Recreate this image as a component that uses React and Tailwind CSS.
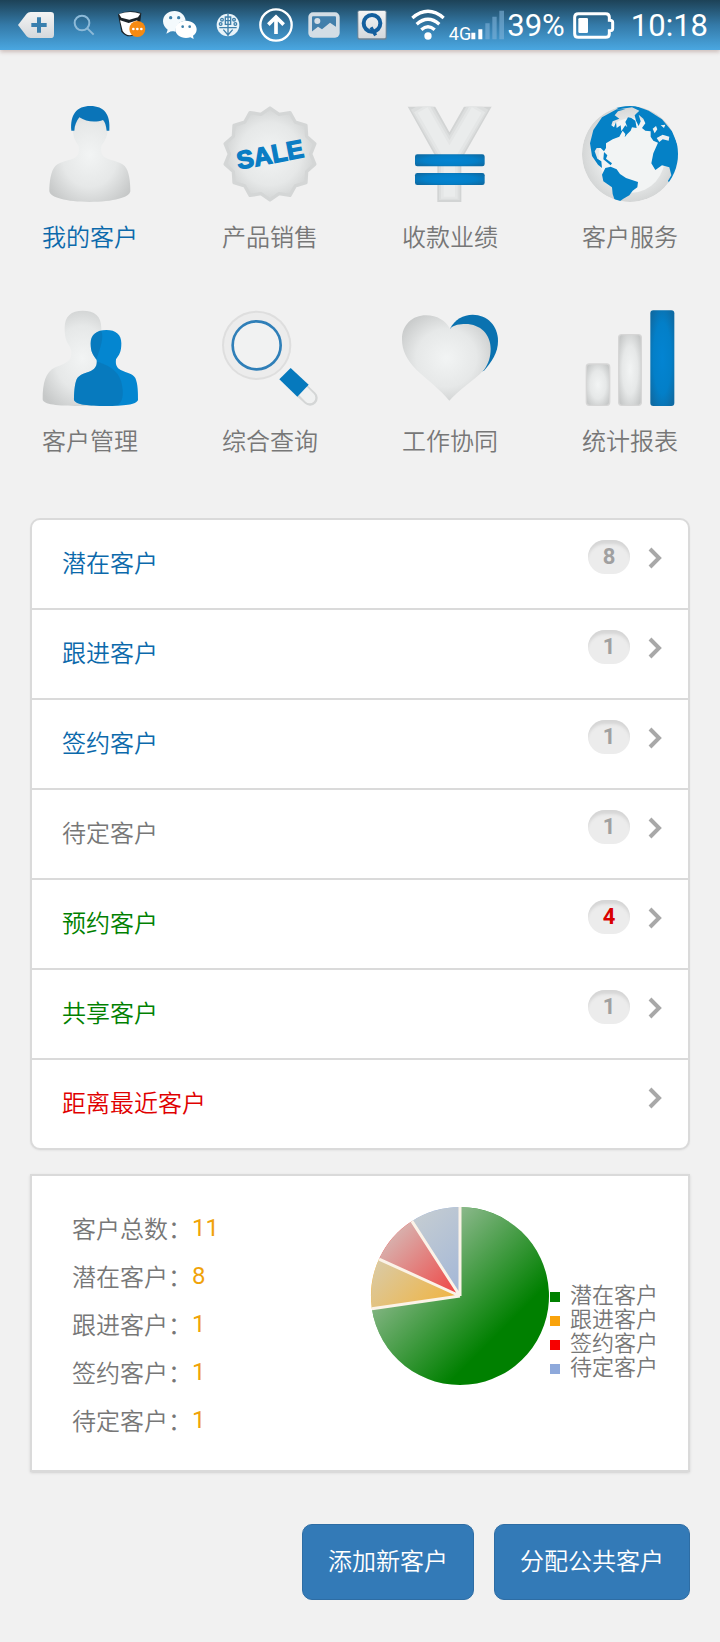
import React from "react";

function IconDefs() {
  return (
    <svg className="absolute h-0 w-0" aria-hidden="true">
      <defs>
        <radialGradient id="silver" cx="50%" cy="50%" r="62%">
          <stop offset="0" stopColor="#f2f4f4" />
          <stop offset="0.55" stopColor="#e6e8e8" />
          <stop offset="1" stopColor="#c6c8c8" />
        </radialGradient>
        <radialGradient id="ocean" cx="50%" cy="50%" r="62%">
          <stop offset="0" stopColor="#0384d2" />
          <stop offset="0.6" stopColor="#037fc8" />
          <stop offset="1" stopColor="#0e6ba4" />
        </radialGradient>
        <linearGradient id="plate" x1="0" y1="0" x2="0" y2="1">
          <stop offset="0" stopColor="#f4f4f4" />
          <stop offset="1" stopColor="#d4d8dc" />
        </linearGradient>
      </defs>
    </svg>
  );
}

function Glyph({ children }) {
  return (
    <svg viewBox="0 0 288 288" className="size-24" aria-hidden="true">
      {children}
    </svg>
  );
}

const PersonIcon = () => (
  <Glyph>
    <path
      d="M94 60C94 25 112 4 145 4C178 4 197 25 197 60C199 90 188 105 178 120C176 135 178 146 188 154C205 166 232 164 248 180C262 195 265 230 265 256C263 274 215 288 143 288C72 288 24 274 22 256C22 230 26 195 40 180C56 164 84 166 101 154C111 146 112 135 110 120C100 105 90 90 94 60Z"
      fill="url(#silver)"
    />
    <path
      d="M88 74C84 26 104 0 145 0C187 0 206 26 202 74H194C192 58 189 48 183 42C162 50 132 48 112 34C103 46 98 58 97 74Z"
      fill="#0a74b8"
    />
  </Glyph>
);

const SEAL_POINTS = Array.from({ length: 28 }, (_, i) => {
  const r = i % 2 ? 122 : 138;
  const a = (i * Math.PI) / 14 - Math.PI / 2;
  return `${(144 + r * Math.cos(a)).toFixed(1)},${(144 + r * Math.sin(a)).toFixed(1)}`;
}).join(" ");

const SaleIcon = () => (
  <Glyph>
    <polygon points={SEAL_POINTS} fill="url(#silver)" stroke="#d4d6d6" strokeWidth="10" strokeLinejoin="round" />
    <text
      x="144"
      y="172"
      textAnchor="middle"
      transform="rotate(-11 144 144)"
      fontSize="76"
      fill="#0a7dc4"
      stroke="#0a7dc4"
      strokeWidth="4"
      className="font-['Liberation_Sans',sans-serif] font-bold"
    >
      SALE
    </text>
  </Glyph>
);

const YenIcon = () => (
  <Glyph>
    <clipPath id="yen-clip">
      <rect x="0" y="2" width="288" height="286" rx="2" />
    </clipPath>
    <g fill="none" strokeLinejoin="round" clipPath="url(#yen-clip)">
      <path d="M46 -20L142 152L240 -20M142 152V288" stroke="#d2d4d4" strokeWidth="72" />
      <path d="M54 -4L142 152L232 -4M142 152V282" stroke="#dcdede" strokeWidth="62" />
      <path d="M58 6L142 152L228 6M142 152V278" stroke="#e4e6e6" strokeWidth="50" />
      <path d="M62 12L142 152L224 12M142 152V272" stroke="#eaecec" strokeWidth="34" />
    </g>
    <rect x="39" y="145" width="209" height="36" rx="7" fill="url(#ocean)" />
    <rect x="39" y="201" width="209" height="36" rx="7" fill="url(#ocean)" />
  </Glyph>
);

const GlobeIcon = () => (
  <Glyph>
    <clipPath id="globe-clip">
      <circle cx="144" cy="144" r="144" />
    </clipPath>
    <g clipPath="url(#globe-clip)">
      <circle cx="144" cy="144" r="144" fill="url(#silver)" />
      <ellipse cx="150" cy="148" rx="100" ry="112" fill="#f2f4f4" />
      <path
        d="M104 10L60 34L34 72L24 112L30 150L48 176L60 186L58 166L46 158L38 136L44 126L56 126L66 136L72 126L72 112L92 100L112 92L122 74L130 84L128 94L136 84L146 74L150 64L164 66L160 44L148 36L138 34L130 48L136 64L130 58L118 76L116 58L104 66L102 48L96 64L88 58L92 46L112 38L98 28L108 16L130 10Z"
        fill="#0581c6"
      />
      <path
        d="M98 2L150 -4L200 14L240 40L270 76L290 124L290 180L264 236L258 224L268 208L262 184L240 178L220 192L208 172L214 142L228 110L214 104L206 92L206 76L190 74L180 66L190 52L184 38L170 26L176 46L170 60L162 44L158 28L172 14L150 4L110 10Z"
        fill="#0581c6"
      />
      <path d="M224 96L242 86L262 92L260 104L242 100L232 108ZM236 58L250 56L246 66ZM212 68L222 60L226 70L218 82Z" fill="#eef0f0" />
      <path
        d="M66 138L76 148L72 158L90 172L86 178L64 160Z M70 186L86 182L104 190L114 204L132 216L168 228L166 244L152 254L142 268L124 278L110 288L98 282L92 264L90 244L64 226L60 206Z"
        fill="#0581c6"
      />
    </g>
  </Glyph>
);

const PeopleIcon = () => (
  <Glyph>
    <path
      d="M68 54C68 18 88 2 122 2C158 2 178 18 178 54C178 84 168 102 158 118C156 138 162 150 178 160C210 172 240 180 240 256C240 280 190 288 110 288C50 288 2 284 2 268C2 220 10 186 40 172C60 164 78 158 86 144C90 126 88 116 80 104C70 90 68 74 68 54Z"
      fill="url(#silver)"
    />
    <path
      d="M146 100C146 74 164 60 193 60C222 60 238 74 238 100C238 126 232 134 222 148C220 164 224 174 236 180C256 190 272 190 280 204C288 222 288 250 288 270C284 284 244 288 192 288C140 288 100 284 96 270C96 250 98 222 104 208C112 192 130 190 148 182C160 176 166 166 164 150C152 134 146 126 146 100Z"
      fill="#0486d0"
    />
    <path
      d="M178 62C192 96 150 160 168 156C208 168 240 190 242 240C244 268 236 284 220 287C150 290 100 284 96 270C96 250 98 222 104 208C112 192 130 190 148 182C160 176 166 166 164 150C152 134 146 126 146 100C146 78 158 66 178 62Z"
      fill="#0b6da8"
      opacity="0.45"
    />
  </Glyph>
);

const SearchIcon = () => (
  <Glyph>
    <circle cx="104" cy="106" r="104" fill="#dedede" />
    <circle cx="104" cy="106" r="98" fill="#ececec" />
    <circle cx="104" cy="106" r="72" fill="#f1f2f2" stroke="#2f7fb8" strokeWidth="8" />
    <path d="M236 238L264 264" stroke="#d4d6d6" strokeWidth="46" strokeLinecap="round" />
    <path d="M238 238L263 263" stroke="#f0f1f1" strokeWidth="34" strokeLinecap="round" />
    <path d="M206 174L260 224L226 260L172 208Z" fill="#0679bd" />
  </Glyph>
);

const HeartIcon = () => (
  <Glyph>
    <path
      d="M144 56C158 28 184 14 212 14C256 14 288 48 288 92C288 128 270 154 246 182L220 190Z"
      fill="#0a72b0"
    />
    <path
      d="M142 272C116 240 76 210 44 180C14 150 0 122 0 88C0 44 32 16 72 16C106 16 130 32 144 56C156 44 174 42 190 42C236 42 266 74 266 116C266 140 260 160 246 180C212 214 168 242 142 272Z"
      fill="url(#silver)"
    />
  </Glyph>
);

const BarsIcon = () => (
  <Glyph>
    <rect x="13" y="162" width="70" height="124" rx="9" fill="url(#silver)" stroke="#d6d6d6" strokeWidth="4" />
    <rect x="110" y="74" width="68" height="212" rx="9" fill="url(#silver)" stroke="#d6d6d6" strokeWidth="4" />
    <rect x="205" y="1" width="72" height="287" rx="9" fill="url(#ocean)" />
  </Glyph>
);

function StatusCell({ children }) {
  return <li className="flex w-12 items-center justify-center">{children}</li>;
}

function StatusBar() {
  return (
    <header className="flex h-[50px] items-center justify-between bg-linear-to-b from-[#1d4257] via-[#347aa8] to-[#4aa7e1] px-3 font-[Roboto,sans-serif] font-normal text-white shadow-[0_2px_4px_rgba(120,70,60,0.3)]">
      <ul className="flex h-full">
        <StatusCell>
          <svg width="36" height="26" viewBox="0 0 108 78">
            <path d="M0 39L26 5Q30 0 38 0H98Q108 0 108 10V68Q108 78 98 78H38Q30 78 26 73Z" fill="url(#plate)" />
            <path d="M63 16V62M40 39H86" stroke="#397fae" strokeWidth="12" />
          </svg>
        </StatusCell>
        <StatusCell>
          <svg width="22" height="22" viewBox="0 0 66 66" fill="none" stroke="#8dbad8" strokeWidth="6">
            <circle cx="27" cy="27" r="22" />
            <path d="M43 43L62 62" />
          </svg>
        </StatusCell>
        <StatusCell>
          <svg width="28" height="28" viewBox="0 0 84 84">
            <path d="M0 10Q34 -6 70 6L64 58Q36 92 10 62Z" fill="#1b2328" />
            <path d="M3 9Q36 -2 67 8L60 19L34 26L10 20Z" fill="#fff" />
            <path d="M6 28L32 36L58 28L54 64Q32 84 14 60Z" fill="#fff" />
            <circle cx="58" cy="54" r="24" fill="#f68a12" />
            <g fill="#fff">
              <circle cx="46" cy="54" r="4" />
              <circle cx="58" cy="54" r="4" />
              <circle cx="70" cy="54" r="4" />
            </g>
          </svg>
        </StatusCell>
        <StatusCell>
          <svg width="34" height="28" viewBox="0 0 102 84">
            <path d="M35 0C14 0 0 14 0 31C0 42 6 50 14 56L10 68L24 61C28 62 34 62 38 62C36 42 50 30 68 29C66 12 52 0 35 0Z" fill="#f4fafd" />
            <path d="M69 29C50 29 37 41 37 55C37 70 51 81 69 81C74 81 78 80 82 79L92 84L90 74C97 70 101 63 101 55C101 41 87 29 69 29Z" fill="#fff" />
            <g fill="#3c80ab">
              <circle cx="23" cy="20" r="5" />
              <circle cx="47" cy="20" r="5" />
              <circle cx="59" cy="47" r="4" />
              <circle cx="80" cy="47" r="4" />
            </g>
          </svg>
        </StatusCell>
        <StatusCell>
          <svg width="24" height="24" viewBox="0 0 72 72">
            <circle cx="36" cy="36" r="34" fill="#e8f3f9" />
            <g fill="none" stroke="#3f80ab" strokeWidth="4">
              <path d="M36 2V70M28 12H44V34H28ZM28 23H44M10 44H62M36 66L22 50M36 66L50 50" />
              <circle cx="18" cy="20" r="4" />
              <circle cx="54" cy="20" r="4" />
              <circle cx="14" cy="33" r="4" />
              <circle cx="58" cy="33" r="4" />
            </g>
          </svg>
        </StatusCell>
        <StatusCell>
          <svg width="34" height="34" viewBox="0 0 102 102" fill="none" stroke="#fff">
            <circle cx="51" cy="51" r="47" strokeWidth="7" />
            <path d="M51 78V28M28 50L51 27L74 50" strokeWidth="11" />
          </svg>
        </StatusCell>
        <StatusCell>
          <svg width="32" height="26" viewBox="0 0 96 78">
            <rect x="1" y="1" width="94" height="76" rx="14" fill="#d3dde5" />
            <rect x="12" y="13" width="72" height="52" rx="3" fill="#427fab" />
            <circle cx="28" cy="27" r="9" fill="#d3dde5" />
            <path d="M10 68V60L30 44L42 52L66 32L86 46V68Z" fill="#d3dde5" />
          </svg>
        </StatusCell>
        <StatusCell>
          <svg width="30" height="30" viewBox="0 0 90 90">
            <rect x="1" y="1" width="88" height="88" rx="6" fill="#6d8496" />
            <rect x="4" y="3" width="82" height="82" rx="4" fill="url(#plate)" />
            <circle cx="45" cy="40" r="25" fill="none" stroke="#145f9e" strokeWidth="12" />
            <path d="M42 52L56 76" stroke="#145f9e" strokeWidth="10" />
          </svg>
        </StatusCell>
      </ul>
      <div className="flex items-center">
        <svg width="34" height="32" viewBox="0 0 102 96" fill="none" stroke="#fff" strokeWidth="10">
          <path d="M4 27Q51 -13 98 27M17 46Q51 16 85 46M31 62Q51 44 71 62" />
          <circle cx="51" cy="81" r="11" fill="#fff" stroke="none" />
        </svg>
        <span className="ml-1 self-end text-lg leading-4">4G</span>
        <svg width="34" height="30" viewBox="0 0 102 90">
          <path d="M1 68H13V88H1ZM22 58H34V88H22Z" fill="#fff" />
          <path d="M43 40H56V88H43ZM64 20H77V88H64ZM85 2H99V88H85Z" fill="#7fb3d8" opacity="0.6" />
        </svg>
        <span className="ml-0.5 pt-0.5 text-[31px] leading-8">39%</span>
        <svg width="42" height="27" viewBox="0 0 126 81" className="ml-2">
          <path
            d="M16 5H98Q109 5 109 16V25Q119 25 119 31V50Q119 56 109 56V65Q109 76 98 76H16Q5 76 5 65V16Q5 5 16 5Z"
            fill="none"
            stroke="#fff"
            strokeWidth="9"
          />
          <rect x="16" y="18" width="29" height="45" rx="4" fill="#fff" />
        </svg>
        <time className="ml-4 pt-0.5 text-[31px] leading-8">10:18</time>
      </div>
    </header>
  );
}

const TILES = [
  { label: "我的客户", Icon: PersonIcon, active: true },
  { label: "产品销售", Icon: SaleIcon },
  { label: "收款业绩", Icon: YenIcon },
  { label: "客户服务", Icon: GlobeIcon },
  { label: "客户管理", Icon: PeopleIcon },
  { label: "综合查询", Icon: SearchIcon },
  { label: "工作协同", Icon: HeartIcon },
  { label: "统计报表", Icon: BarsIcon },
];

function TileNav() {
  return (
    <nav className="grid grid-cols-4 gap-y-14 pt-14">
      {TILES.map(({ label, Icon, active }) => (
        <a key={label} href="#" className="flex flex-col items-center gap-4">
          <Icon />
          <span className={active ? "leading-9 text-[#0b69ab]" : "leading-9 text-[#777777]"}>{label}</span>
        </a>
      ))}
    </nav>
  );
}

const GROUPS = [
  { label: "潜在客户", count: 8, tone: "text-[#0b69ab]" },
  { label: "跟进客户", count: 1, tone: "text-[#0b69ab]" },
  { label: "签约客户", count: 1, tone: "text-[#0b69ab]" },
  { label: "待定客户", count: 1, tone: "text-[#777777]" },
  { label: "预约客户", count: 4, tone: "text-[#008000]", alert: true },
  { label: "共享客户", count: 1, tone: "text-[#008000]" },
  { label: "距离最近客户", tone: "text-[#e00000]" },
];

function GroupList() {
  return (
    <ul className="divide-y-2 divide-[#dadada] rounded-[10px] border-2 border-[#dadada] bg-white shadow-xs">
      {GROUPS.map(({ label, count, tone, alert }) => (
        <li key={label}>
          <a href="#" className="flex h-22 items-start pt-5 pr-[26px] pl-[30px]">
            <span className={`flex-1 pt-1 leading-9 ${tone}`}>{label}</span>
            {count !== undefined && (
              <span
                className={`flex h-[34px] w-[42px] items-center justify-center rounded-[17px] bg-[#ececec] font-[Roboto,sans-serif] text-[22px] font-bold shadow-[inset_0_5px_3px_-1px_#d6d6d6] ${
                  alert ? "text-[#d90000]" : "text-[#a0a0a0]"
                }`}
              >
                {count}
              </span>
            )}
            <svg width="14" height="22" viewBox="0 0 14 22" className="mt-[7px] ml-[18px]" fill="none" stroke="#a8a8a8" strokeWidth="4">
              <path d="M2 2L11 11L2 20" />
            </svg>
          </a>
        </li>
      ))}
    </ul>
  );
}

const STATS = [
  ["客户总数：", 11],
  ["潜在客户：", 8],
  ["跟进客户：", 1],
  ["签约客户：", 1],
  ["待定客户：", 1],
];

const SLICES = [
  { label: "潜在客户", value: 8, fill: "#008000", swatch: "bg-[#008000]" },
  { label: "跟进客户", value: 1, fill: "#ffa500", swatch: "bg-[#f9a30c]" },
  { label: "签约客户", value: 1, fill: "#ff0000", swatch: "bg-[#f70000]" },
  { label: "待定客户", value: 1, fill: "#8ea9db", swatch: "bg-[#8ea9db]" },
];

function PieChart() {
  const total = SLICES.reduce((sum, s) => sum + s.value, 0);
  const at = (n) => {
    const a = (n / total) * 2 * Math.PI - Math.PI / 2;
    return `${(90 + 89 * Math.cos(a)).toFixed(2)} ${(90 + 89 * Math.sin(a)).toFixed(2)}`;
  };
  let start = 0;
  const wedges = SLICES.map((s) => {
    const from = start;
    start += s.value;
    return (
      <path
        key={s.label}
        d={`M90 90L${at(from)}A89 89 0 ${s.value / total > 0.5 ? 1 : 0} 1 ${at(start)}Z`}
        fill={s.fill}
      />
    );
  });
  return (
    <svg viewBox="0 0 180 180" className="size-[180px] shrink-0" aria-hidden="true">
      <defs>
        <linearGradient id="sheen" gradientUnits="userSpaceOnUse" x1="25" y1="25" x2="128" y2="128">
          <stop offset="0" stopColor="#d0d4d0" stopOpacity="0.84" />
          <stop offset="1" stopColor="#d0d4d0" stopOpacity="0" />
        </linearGradient>
      </defs>
      {wedges}
      <circle cx="90" cy="90" r="89" fill="url(#sheen)" />
      <path
        d={[0, 8, 9, 10].map((n) => `M90 90L${at(n)}`).join("")}
        stroke="#fbf3e8"
        strokeWidth="3"
      />
    </svg>
  );
}

function Summary() {
  return (
    <section className="flex items-start justify-between border-2 border-[#dadada] bg-white pt-7 pb-[26px] pl-10 shadow-sm">
      <dl className="text-[#777777]">
        {STATS.map(([label, value]) => (
          <div key={label} className="flex leading-12">
            <dt>{label}</dt>
            <dd className="font-[Roboto,sans-serif] font-normal text-[#f0a30a]">{value}</dd>
          </div>
        ))}
      </dl>
      <div className="flex pt-0.5 pr-[30px]">
        <PieChart />
        <ul className="pt-[75px] text-[22px] leading-6 text-[#777777]">
          {SLICES.map(({ label, swatch }) => (
            <li key={label} className="flex items-center gap-[10px]">
              <span className={`mt-2 size-[10px] ${swatch}`} />
              {label}
            </li>
          ))}
        </ul>
      </div>
    </section>
  );
}

const BUTTON =
  "h-19 rounded-[10px] border border-[#2e6da4] bg-[#337ab7] px-[25px] pb-1 text-white";

export default function App() {
  return (
    <div className="min-h-screen bg-[#f1f1f1] font-['Noto_Sans_CJK_SC',sans-serif] text-2xl font-[350]">
      <IconDefs />
      <StatusBar />
      <TileNav />
      <main className="flex flex-col gap-6 px-[30px] pt-15 pb-[38px]">
        <GroupList />
        <Summary />
        <div className="flex justify-end gap-5 pt-7">
          <button type="button" className={BUTTON}>添加新客户</button>
          <button type="button" className={BUTTON}>分配公共客户</button>
        </div>
      </main>
    </div>
  );
}
